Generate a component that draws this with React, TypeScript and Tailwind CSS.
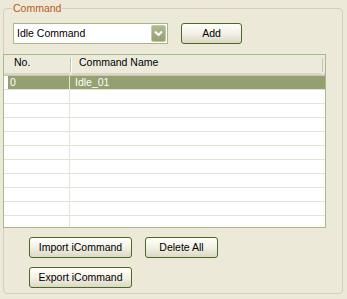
import React from 'react'

const rows = Array.from({ length: 11 }, (_, i) => (i === 0 ? { no: '0', name: 'Idle_01' } : null))

function XpButton({ label, width }: { label: string; width: string }) {
    return (
        <button
            type="button"
            className={`${width} h-[21px] rounded-[3px] border border-[#4a6a24] bg-gradient-to-b from-[#fffffb] via-[#f3f1e6] to-[#dcd8c6] text-[10.5px] text-black leading-none flex items-center justify-center`}
        >
            {label}
        </button>
    )
}

export default function App() {
    return (
        <div
            className="w-[347px] h-[299px] bg-[#ece9d8] pt-[1px] pl-[3px] overflow-hidden"
            style={{ fontFamily: '"Liberation Sans", Arial, sans-serif' }}
        >
            <fieldset className="w-[340px] h-[293px] border border-[#d0d0bf] rounded-[4px] m-0 p-0">
                <legend className="ml-[8px] px-[1px] text-[10.5px] leading-[14px] text-[#b95c15]">Command</legend>

                {/* combo + add */}
                <div className="flex items-center gap-[13px] mt-[8px] ml-[9px]">
                    <div className="w-[155px] h-[21px] border border-[#a5b98a] bg-white flex items-stretch">
                        <div className="flex-1 pl-[3px] text-[10.5px] text-black flex items-center">Idle Command</div>
                        <div className="w-[15px] my-[1px] mr-[1px] rounded-[2px] border border-[#c3cbab] bg-gradient-to-b from-[#b0ba90] to-[#949f72] flex items-center justify-center">
                            <svg width="9" height="7" viewBox="0 0 9 7">
                                <path d="M1 1.5 L4.5 5 L8 1.5" fill="none" stroke="#ffffff" strokeWidth="2" />
                            </svg>
                        </div>
                    </div>
                    <XpButton label="Add" width="w-[61px]" />
                </div>

                {/* list view */}
                <div className="-ml-[1px] mt-[10px] w-[323px] h-[174px] border border-[#a5b98a] bg-white overflow-hidden">
                    <div className="flex h-[21px] bg-[#ebeadb] text-[10.5px] text-black border-b border-[#cbc7b8]">
                        <div className="w-[66px] flex items-center pl-[10px] pb-[2px] border-b-2 border-[#d9d6c6]">No.</div>
                        <div className="w-[1px] my-[3px] bg-[#c7c5b2]" />
                        <div className="w-[1px] my-[3px] bg-white" />
                        <div className="w-[250px] flex items-center pl-[7px] pb-[2px] border-b-2 border-[#d9d6c6]">Command Name</div>
                        <div className="w-[1px] my-[3px] bg-[#c7c5b2]" />
                        <div className="flex-1 border-b-2 border-[#d9d6c6]" />
                    </div>
                    {rows.map((r, i) => (
                        <div key={i} className="flex h-[14px] border-b border-[#e4e3d6] text-[10.5px] leading-none">
                            <div className="w-[66px] flex border-r border-[#e4e3d6]">
                                <div className="w-[4px] shrink-0" />
                                <div className={`flex-1 flex items-center pl-[2px] ${r ? 'bg-[#93a070] text-white' : ''}`}>{r?.no}</div>
                            </div>
                            <div className={`flex-1 flex items-center pl-[5px] ${r ? 'bg-[#93a070] text-white' : ''}`}>{r?.name}</div>
                        </div>
                    ))}
                </div>

                {/* bottom buttons */}
                <div className="flex gap-[13px] mt-[9px] ml-[25px]">
                    <XpButton label="Import iCommand" width="w-[103px]" />
                    <XpButton label="Delete All" width="w-[73px]" />
                </div>
                <div className="flex mt-[9px] ml-[25px]">
                    <XpButton label="Export iCommand" width="w-[103px]" />
                </div>
            </fieldset>
        </div>
    )
}
